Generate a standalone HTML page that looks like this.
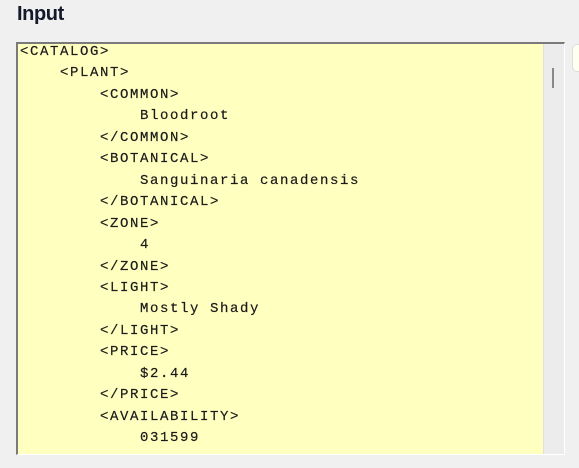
<!DOCTYPE html>
<html><head><style>
body{margin:0;width:579px;height:468px;background:#f0f0f0;overflow:hidden;font-family:"Liberation Sans",sans-serif;position:relative}
.t{position:absolute;left:17px;top:3px;font-size:20px;font-weight:bold;color:#141a2a;letter-spacing:-0.4px}
.box{position:absolute;left:16px;top:42px;width:546px;height:410px;border-top:2px solid #7a7a7a;border-left:2px solid #7a7a7a;border-right:1px solid #fff;border-bottom:1px solid #fff;background:#ffffc0;overflow:hidden}
.sb{position:absolute;right:0;top:0;width:20px;height:100%;background:#ececec;border-left:1px solid #e0e0e0}
.th{position:absolute;left:8px;top:24px;width:2px;height:20px;background:#888}
pre{margin:0;position:absolute;left:2px;top:-2px;font-family:"Liberation Mono","Courier New",monospace;font-size:14px;letter-spacing:1.6px;line-height:21.45px;color:#1a1a1a;-webkit-text-stroke:0.2px #1a1a1a}
.r{position:absolute;left:572px;top:44px;width:20px;height:26px;border:1px solid #ddd;border-radius:5px;background:#fffff0}
</style></head><body>
<div class="t">Input</div>
<div class="box"><pre>&lt;CATALOG&gt;
    &lt;PLANT&gt;
        &lt;COMMON&gt;
            Bloodroot
        &lt;/COMMON&gt;
        &lt;BOTANICAL&gt;
            Sanguinaria canadensis
        &lt;/BOTANICAL&gt;
        &lt;ZONE&gt;
            4
        &lt;/ZONE&gt;
        &lt;LIGHT&gt;
            Mostly Shady
        &lt;/LIGHT&gt;
        &lt;PRICE&gt;
            $2.44
        &lt;/PRICE&gt;
        &lt;AVAILABILITY&gt;
            031599</pre>
<div class="sb"><div class="th"></div></div></div>
<div class="r"></div>
</body></html>
